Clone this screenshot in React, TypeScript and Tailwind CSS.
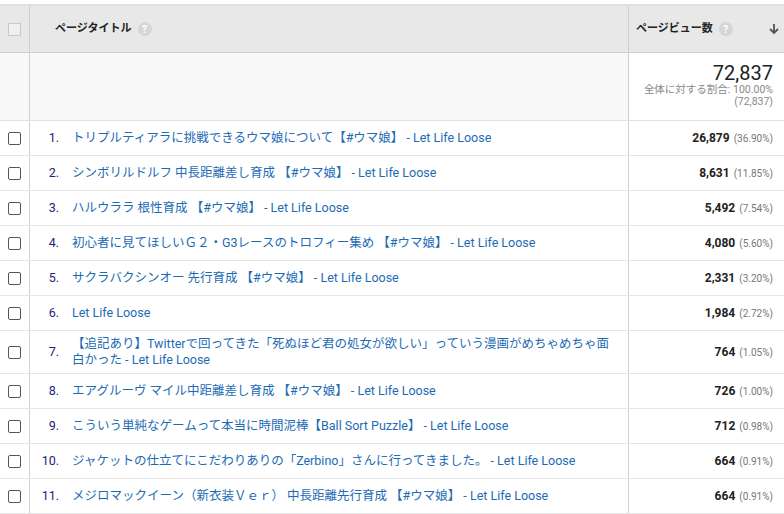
const rows = [
  ["トリプルティアラに挑戦できるウマ娘について【#ウマ娘】 - Let Life Loose", "26,879", "(36.90%)"],
  ["シンボリルドルフ 中長距離差し育成 【#ウマ娘】 - Let Life Loose", "8,631", "(11.85%)"],
  ["ハルウララ 根性育成 【#ウマ娘】 - Let Life Loose", "5,492", "(7.54%)"],
  ["初心者に見てほしいＧ２・G3レースのトロフィー集め 【#ウマ娘】 - Let Life Loose", "4,080", "(5.60%)"],
  ["サクラバクシンオー 先行育成 【#ウマ娘】 - Let Life Loose", "2,331", "(3.20%)"],
  ["Let Life Loose", "1,984", "(2.72%)"],
  ["【追記あり】Twitterで回ってきた「死ぬほど君の処女が欲しい」っていう漫画がめちゃめちゃ面白かった - Let Life Loose", "764", "(1.05%)"],
  ["エアグルーヴ マイル中距離差し育成 【#ウマ娘】 - Let Life Loose", "726", "(1.00%)"],
  ["こういう単純なゲームって本当に時間泥棒【Ball Sort Puzzle】 - Let Life Loose", "712", "(0.98%)"],
  ["ジャケットの仕立てにこだわりありの「Zerbino」さんに行ってきました。 - Let Life Loose", "664", "(0.91%)"],
  ["メジロマックイーン（新衣装Ｖｅｒ） 中長距離先行育成 【#ウマ娘】 - Let Life Loose", "664", "(0.91%)"],
];

function Q() {
  return <span className="inline-flex w-[14px] h-[14px] rounded-full bg-[#d6d6d6] text-white text-[10px] font-bold items-center justify-center ml-[6px]">?</span>;
}

export default function App() {
  return (
    <div className="w-[784px] h-[514px] bg-white overflow-hidden pt-[4px] text-[12px] text-[#222]" style={{ fontFamily: 'Roboto,"Noto Sans CJK JP",sans-serif' }}>
      <div className="border-t-[2px] border-[#e0e0e0]">
        <div className="flex h-[47px] bg-[#e8e8e8] border-b border-[#d0d0d0]">
          <div className="w-[30px] border-r border-[#d0d0d0] flex items-center justify-center">
            <div className="w-[13px] h-[13px] border border-[#c8c8c8] bg-[#f0f0f0]" />
          </div>
          <div className="w-[599px] border-r border-[#d0d0d0] flex items-center pl-[25px] font-bold text-[11px]">ページタイトル<Q /></div>
          <div className="flex-1 flex items-center pl-[7px] pr-[4px] font-bold text-[11px]">
            ページビュー数<Q />
            <svg className="ml-auto" width="12" height="12" viewBox="0 0 12 12"><path d="M6 1v9M2 6l4 4 4-4" stroke="#555" strokeWidth="1.8" fill="none" /></svg>
          </div>
        </div>
        <div className="flex h-[68px] bg-[#f8f8f8] border-b border-[#e0e0e0]">
          <div className="w-[30px] border-r border-[#d0d0d0]" />
          <div className="w-[599px] border-r border-[#d0d0d0]" />
          <div className="flex-1 bg-white text-right pr-[11px] pt-[10px] leading-none">
            <div className="text-[20px] text-[#222]">72,837</div>
            <div className="text-[10.5px] text-[#888] mt-[2px]">全体に対する割合: 100.00%</div>
            <div className="text-[10.5px] text-[#888] mt-[1px]">(72,837)</div>
          </div>
        </div>
        {rows.map((r, i) => (
          <div key={i} className={`flex ${i === 6 ? "h-[43px]" : "h-[35px]"} border-b border-[#e6e6e6]`}>
            <div className="w-[30px] border-r border-[#d0d0d0] flex items-center justify-center">
              <div className="w-[13px] h-[13px] border border-[#555] rounded-[2px] bg-white" />
            </div>
            <div className="w-[599px] border-r border-[#d0d0d0] flex items-center text-[12.5px]">
              <span className="w-[42px] text-right pr-[13px] text-[#1a237e] shrink-0">{i + 1}.</span>
              <span className="text-[#1c6bb5] leading-[16px] pr-[12px]">{r[0]}</span>
            </div>
            <div className="flex-1 flex items-center justify-end pr-[11px]">
              <span className="font-bold text-[12px]">{r[1]}</span>
              <span className="text-[#777] text-[10px] ml-[4px]">{r[2]}</span>
            </div>
          </div>
        ))}
      </div>
    </div>
  );
}
